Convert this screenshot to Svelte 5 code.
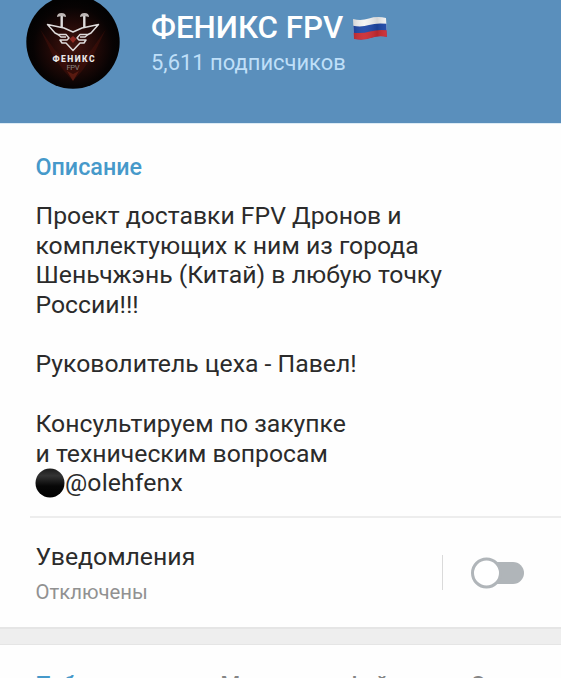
<script>
  const description = [
    'Проект доставки FPV Дронов и',
    'комплектующих к ним из города',
    'Шеньчжэнь (Китай) в любую точку',
    'России!!!',
    '',
    'Руковолитель цеха - Павел!',
    '',
    'Консультируем по закупке',
    'и техническим вопросам'
  ];
  const tabs = ['Публикации', 'Медиа', 'Файлы', 'Ссылки'];
</script>

<div class="screen">
  <header>
    <svg class="avatar" width="94" height="94" viewBox="0 0 94 94">
      <defs>
        <radialGradient id="glow" cx="50%" cy="55%" r="50%">
          <stop offset="0" stop-color="#42140f" />
          <stop offset=".5" stop-color="#210907" />
          <stop offset=".85" stop-color="#070303" />
          <stop offset="1" stop-color="#030202" />
        </radialGradient>
      </defs>
      <circle cx="47" cy="47" r="46.700" fill="url(#glow)" />
      <path d="M14 34 26 59 38 76 47 86 56 76 68 59 80 34 66 54 54 67 47 74 40 67 28 54Z" fill="#64180e" opacity=".3" />
      <path d="M41 76 47 79 53 76 47 86Z" fill="#6b2114" opacity=".7" />
      <g fill="none" stroke="#dedcdc" stroke-width="1.500" stroke-linejoin="round">
        <path d="M21.500 29.500 38 33 47 37 56 33 72.500 29.500 65 38 62 39.500H54L51 43L53 45H60L58 48H54L47 55.500 40 48H36L34 45H41L43 43L40 39.500H32L29 38Z" />
        <path d="M32 39.500 35 42H40M62 39.500 59 42H54" />
        <path d="M35.700 20V32M58.300 20V32" stroke-width="2.400" />
      </g>
      <path d="M31 22Q31 18 35.500 18T40 22L35.500 21ZM54 22Q54 18 58.500 18T63 22L58.500 21Z" fill="#bdb7b5" />
      <path d="M43.500 44 47 41 50.500 44 47 48Z" fill="#8e2922" />
      <text x="47.500" y="66.500" textLength="42" fill="#e9e7e7" font-size="8.500" font-weight="900" text-anchor="middle">ФЕНИКС</text>
      <text x="47" y="74.500" textLength="13" fill="#8b8583" font-size="7.500" text-anchor="middle">FPV</text>
    </svg>
    <div class="identity">
      <div class="title">
        <h1>ФЕНИКС FPV</h1>
        <svg width="36" height="26" viewBox="0 0 36 26">
          <defs>
            <clipPath id="wave"><path d="M1 4Q9 6 17 3.500T34 3L35 22Q27 20 19 23T2 24Z" /></clipPath>
            <linearGradient id="fold">
              <stop offset="0" stop-color="#000" stop-opacity=".15" />
              <stop offset=".35" stop-color="#fff" stop-opacity=".06" />
              <stop offset=".7" stop-color="#000" stop-opacity=".12" />
              <stop offset="1" stop-color="#fff" stop-opacity=".05" />
            </linearGradient>
          </defs>
          <g clip-path="url(#wave)">
            <path d="M0 0H36V26H0Z" fill="#f3f3f3" />
            <path d="M0 10.500Q9 12.500 17 10T36 9V26H0Z" fill="#1d47a8" />
            <path d="M0 17.500Q9 19 18 16.500T36 15.500V26H0Z" fill="#cd2b32" />
            <path d="M0 0H36V26H0Z" fill="url(#fold)" />
          </g>
        </svg>
      </div>
      <p>5,611 подписчиков</p>
    </div>
  </header>

  <section class="about">
    <h2>Описание</h2>
    <div class="description">
      {#each description as line}
        <div class="line">{line}</div>
      {/each}
      <div class="line contact">
        <svg width="30" height="30" viewBox="0 0 30 30">
          <defs>
            <linearGradient id="ball" x2="0" y2="1">
              <stop offset="0" stop-color="#1c1c1c" />
              <stop offset=".25" stop-color="#343434" />
              <stop offset=".6" stop-color="#080808" />
              <stop offset="1" stop-color="#000" />
            </linearGradient>
          </defs>
          <circle cx="15" cy="15" r="14.500" fill="url(#ball)" />
        </svg><span>@olehfenx</span>
      </div>
    </div>
  </section>

  <section class="notifications">
    <div class="label">
      <h3>Уведомления</h3>
      <p>Отключены</p>
    </div>
    <i class="separator"></i>
    <svg width="56" height="32" viewBox="0 0 56 32">
      <rect x="12" y="5" width="42" height="22" rx="11" fill="#b0b5b9" />
      <circle cx="16.500" cy="16" r="14" fill="#fff" stroke="#b0b5b9" stroke-width="3" />
    </svg>
  </section>

  <div class="gap"></div>

  <nav>
    {#each tabs as tab, i}
      <span class:active={i === 0}>{tab}</span>
    {/each}
  </nav>
</div>

<style>
  :global(body) { background: #fefefe; }
  .screen { box-sizing: border-box; width: 561px; height: 678px; overflow: hidden; font-family: Roboto, sans-serif; color: #2b2b2b; background: #fefefe; }
  h1, h2, h3, p { margin: 0; white-space: nowrap; }
  header { display: flex; box-sizing: border-box; height: 124px; background: #5a8fbc; border-bottom: 1px solid #dcebf5; }
  .avatar { flex: none; margin: -5px 0 0 26px; }
  .identity { margin-left: 31px; padding-top: 9px; }
  .title { display: flex; align-items: center; height: 38px; gap: 9px; }
  h1 { font-size: 31.300px; line-height: 38px; font-weight: 500; color: #fff; }
  header p { margin-top: 3px; font-size: 21.950px; line-height: 26px; color: #bfdff8; }
  .about { box-sizing: border-box; height: 392px; padding: 29px 0 0 35.500px; }
  h2 { font-size: 23.300px; line-height: 28px; font-weight: 500; color: #4699ca; }
  .description { margin-top: 20px; font-size: 24.750px; line-height: 29.700px; }
  .line { height: 29.700px; white-space: pre; }
  .contact { display: flex; align-items: center; }
  .contact svg { flex: none; margin-left: -.5px; }
  .contact span { letter-spacing: .15px; }
  .notifications { display: flex; box-sizing: border-box; align-items: center; height: 111px; margin-left: 30px; padding-left: 5.500px; border-top: 2px solid #ededed; }
  .label { width: 406.500px; padding-top: 1px; }
  h3 { font-size: 24.800px; line-height: 30px; font-weight: 400; }
  .label p { margin-top: 8px; font-size: 20.300px; line-height: 25px; color: #919191; }
  .separator { width: 1px; height: 35px; margin-right: 27px; background: #dadada; }
  .gap { box-sizing: border-box; height: 18px; background: #eee; border-top: 2px solid #e5e5e5; border-bottom: 1px solid #e5e5e5; }
  nav { display: grid; grid-template-columns: 185px 125px 125px auto; padding: 25px 0 0 35.500px; font-size: 22.500px; line-height: 28px; font-weight: 500; color: #858585; white-space: nowrap; }
  .active { color: #4699ca; }
</style>
